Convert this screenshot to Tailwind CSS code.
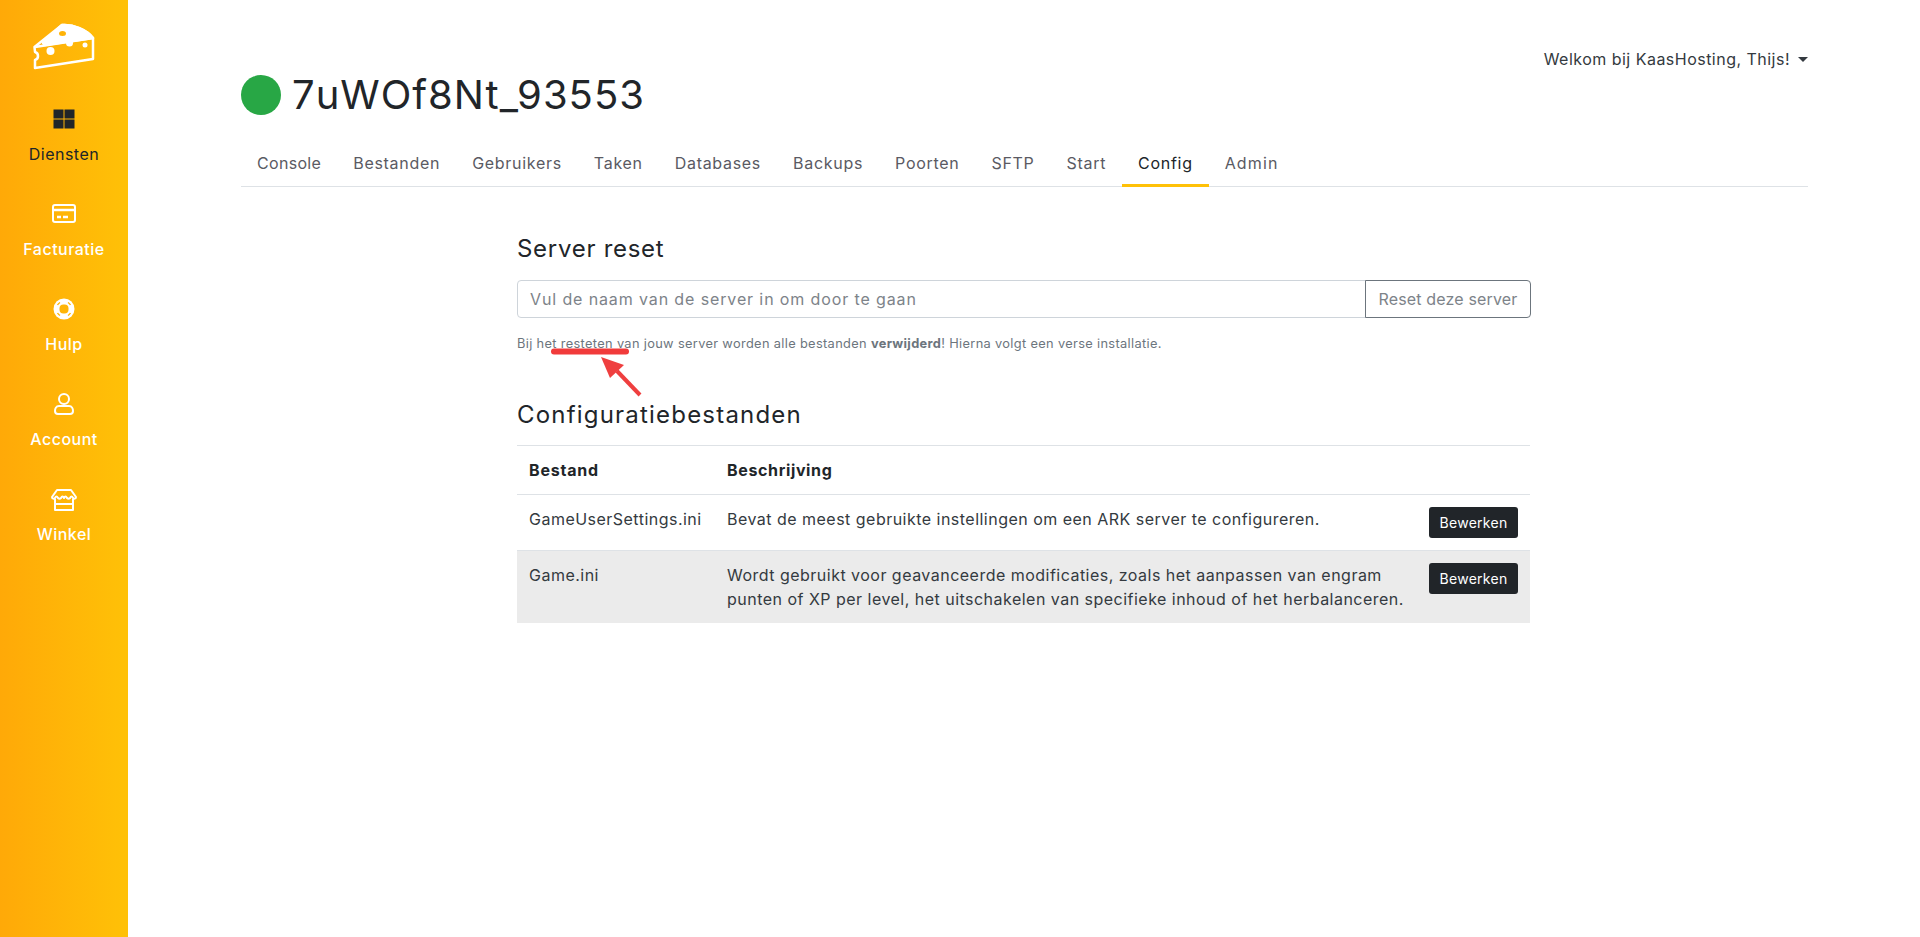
<!DOCTYPE html>
<html lang="nl">
<head>
    <meta charset="UTF-8">
    <meta name="viewport" content="width=device-width, initial-scale=1.0">
    <title>KaasHosting - Config</title>
    <script src="https://cdn.jsdelivr.net/npm/@tailwindcss/browser@4"></script>
</head>
<body class="font-['Inter',sans-serif] text-[#212529] bg-white">
<div class="flex h-[937px] overflow-hidden">

    <!-- Sidebar -->
    <aside class="w-[128px] shrink-0 bg-linear-to-r from-[#ffa908] to-[#ffc107] flex flex-col items-center text-white">
        <svg class="mt-[22px] w-[62px] h-[48px]" viewBox="0 0 62 48" fill="none" stroke="#fff" stroke-width="2.5" stroke-linejoin="round">
            <path d="M1.5 25 L29 3 C40 2 54 8 60 16 L60 37 L2 46 L2 38 C6 37 6 31 2 30 Z" fill="none"/>
            <path d="M2 25 L60 16" />
            <path d="M10 21 L29 3 C40 2 54 8 60 16 L12 23 Z" fill="#fff"/>
            <ellipse cx="29.5" cy="11.5" rx="3.5" ry="2.5" fill="#ffb306" stroke="none"/>
            <circle cx="17.5" cy="29" r="4" fill="#fff" stroke="none"/>
            <circle cx="36.5" cy="21" r="3.5" fill="#fff" stroke="none"/>
            <circle cx="52" cy="23" r="2.5" fill="#fff" stroke="none"/>
        </svg>

        <nav class="mt-[39px] flex flex-col gap-[38px] w-full text-[16px] tracking-[0.03em] font-medium">
            <a class="flex flex-col items-center text-[#212529] font-normal">
                <svg class="w-[22px] h-[20px]" viewBox="0 0 22 20" fill="#212529">
                    <rect x="0.5" y="0.5" width="10" height="9" /><rect x="11.5" y="0.5" width="10" height="9" />
                    <rect x="0.5" y="10.5" width="10" height="9" /><rect x="11.5" y="10.5" width="10" height="9" />
                </svg>
                <span class="mt-[13px] leading-[24px]">Diensten</span>
            </a>
            <a class="flex flex-col items-center">
                <svg class="w-[24px] h-[20px]" viewBox="0 0 24 20" fill="none" stroke="#fff" stroke-width="2">
                    <rect x="1" y="1" width="22" height="17" rx="2" />
                    <path d="M1 6 H23" stroke-width="2.5"/>
                    <path d="M5 13 H9 M11 13 H16" stroke-width="2.5"/>
                </svg>
                <span class="mt-[13px] leading-[24px]">Facturatie</span>
            </a>
            <a class="flex flex-col items-center">
                <svg class="w-[22px] h-[22px] -mt-[1px]" viewBox="0 0 22 22">
                    <circle cx="11" cy="11" r="10.5" fill="#fff"/>
                    <rect x="6.5" y="6.5" width="9" height="9" rx="4" fill="#ffb506"/>
                    <path d="M4.5 7 A8 8 0 0 1 7 4.5 M15 4.5 A8 8 0 0 1 17.5 7 M17.5 15 A8 8 0 0 1 15 17.5 M7 17.5 A8 8 0 0 1 4.5 15" fill="none" stroke="#ffb506" stroke-width="1.4"/>
                </svg>
                <span class="mt-[12px] leading-[24px]">Hulp</span>
            </a>
            <a class="flex flex-col items-center">
                <svg class="w-[20px] h-[22px] -mt-[1px]" viewBox="0 0 20 22" fill="none" stroke="#fff" stroke-width="2">
                    <circle cx="10" cy="6" r="5"/>
                    <path d="M5 13 H15 C18 13 19 16 19 18 C19 20 18 21 16 21 H4 C2 21 1 20 1 18 C1 16 2 13 5 13 Z"/>
                </svg>
                <span class="mt-[12px] leading-[24px]">Account</span>
            </a>
            <a class="flex flex-col items-center">
                <svg class="w-[26px] h-[22px]" viewBox="0 0 26 22" fill="none" stroke="#fff" stroke-width="2" stroke-linejoin="round">
                    <path d="M6 1 H20 L25 8 C25 10 23 10 22 9 C21 7 20 7 19 9 C18 10 17 10 16 9 C15 7 14 7 13 9 C12 7 11 7 10 9 C9 10 8 10 7 9 C6 7 5 7 4 9 C3 10 1 10 1 8 Z"/>
                    <path d="M4 10 V21 H22 V10 M4 15 H22"/>
                </svg>
                <span class="mt-[11px] leading-[24px]">Winkel</span>
            </a>
        </nav>
    </aside>

    <!-- Main -->
    <main class="flex-1 pl-[113px] pr-[112px] relative">
        <div class="flex justify-end pt-[48px] text-[16px] leading-[22px] text-[#343a40] tracking-[0.03em]">
            <span>Welkom bij KaasHosting, Thijs!</span>
            <span class="ml-[8px] mt-[9px] w-0 h-0 border-x-[5px] border-x-transparent border-t-[5px] border-t-[#343a40]"></span>
        </div>

        <h1 class="mt-[1px] flex items-center text-[40px] leading-[48px] tracking-[0.025em] text-[#212529]">
            <span class="w-[40px] h-[40px] rounded-full bg-[#28a745] mr-[11px]"></span>
            7uWOf8Nt_93553
        </h1>

        <div class="mt-[24px] flex border-b border-[#dee2e6] text-[16px] leading-[24px] text-[#5a5a63] tracking-[0.044em]">
            <a class="px-[16px] pt-[8px] pb-[11px] tracking-[0.02em]">Console</a>
            <a class="px-[16px] pt-[8px] pb-[11px]">Bestanden</a>
            <a class="px-[16px] pt-[8px] pb-[11px]">Gebruikers</a>
            <a class="px-[16px] pt-[8px] pb-[11px]">Taken</a>
            <a class="px-[16px] pt-[8px] pb-[11px]">Databases</a>
            <a class="px-[16px] pt-[8px] pb-[11px]">Backups</a>
            <a class="px-[16px] pt-[8px] pb-[11px]">Poorten</a>
            <a class="px-[16px] pt-[8px] pb-[11px]">SFTP</a>
            <a class="px-[16px] pt-[8px] pb-[11px]">Start</a>
            <a class="px-[16px] pt-[8px] pb-[9px] -mb-px border-b-[3px] border-[#ffc107] text-[#212529]">Config</a>
            <a class="px-[16px] pt-[8px] pb-[11px] tracking-[0.07em]">Admin</a>
        </div>

        <section class="ml-[276px] w-[1014px] relative">
            <h2 class="pt-[47px] text-[24px] leading-[29px] tracking-[0.03em]">Server reset</h2>

            <div class="mt-[17px] flex h-[38px] text-[16px]">
                <div class="flex-1 border border-[#ced4da] rounded-l-[4px] px-[12px] flex items-center text-[#7d8389] tracking-[0.055em]">Vul de naam van de server in om door te gaan</div>
                <button class="w-[166px] -ml-px border border-[#6c757d] rounded-r-[4px] text-[#7d8389] tracking-[0.01em]">Reset deze server</button>
            </div>
            <p class="mt-[16px] text-[12.8px] leading-[19px] text-[#6c757d] tracking-[0.027em]">Bij het resteten van jouw server worden alle bestanden <b class="font-bold">verwijderd</b>! Hierna volgt een verse installatie.</p>

            <!-- annotation: red underline and arrow -->
            <svg class="absolute left-[28px] top-[158px] w-[100px] h-[55px]" viewBox="0 0 100 55" fill="none">
                <path d="M9 6.5 H81" stroke="#f13b3b" stroke-width="6" stroke-linecap="round"/>
                <path d="M95 50 L72 26" stroke="#ef3f3f" stroke-width="4"/>
                <path d="M56 12 L79 20 L65 33 Z" fill="#ef3f3f"/>
            </svg>

            <h2 class="mt-[47px] text-[24px] leading-[29px] tracking-[0.05em]">Configuratiebestanden</h2>

            <table class="mt-[16px] w-[1013px] table-fixed text-[16px] leading-[24px] tracking-[0.03em] border-collapse">
                <thead>
                    <tr class="border-t border-b border-[#dee2e6] h-[49px] text-left">
                        <th class="w-[198px] px-[12px] font-bold tracking-[0.05em]">Bestand</th>
                        <th class="px-[12px] font-bold tracking-[0.04em]">Beschrijving</th>
                        <th class="w-[113px]"></th>
                    </tr>
                </thead>
                <tbody class="text-[#343a40]">
                    <tr class="border-b border-[#dee2e6]">
                        <td class="px-[12px] pt-[12px] pb-[19px] align-top">GameUserSettings.ini</td>
                        <td class="px-[12px] pt-[12px] pb-[19px] align-top">Bevat de meest gebruikte instellingen om een ARK server te configureren.</td>
                        <td class="pr-[12px] py-[12px] align-top text-right">
                            <button class="h-[31px] w-[89px] rounded-[3px] bg-[#212529] text-white text-[14px] tracking-[0.02em]">Bewerken</button>
                        </td>
                    </tr>
                    <tr class="bg-[#ebebeb]">
                        <td class="px-[12px] py-[12px] align-top">Game.ini</td>
                        <td class="px-[12px] py-[12px] align-top">Wordt gebruikt voor geavanceerde modificaties, zoals het aanpassen van engram<br>punten of XP per level, het uitschakelen van specifieke inhoud of het herbalanceren.</td>
                        <td class="pr-[12px] py-[12px] align-top text-right">
                            <button class="h-[31px] w-[89px] rounded-[3px] bg-[#212529] text-white text-[14px] tracking-[0.02em]">Bewerken</button>
                        </td>
                    </tr>
                </tbody>
            </table>
        </section>
    </main>
</div>
</body>
</html>
